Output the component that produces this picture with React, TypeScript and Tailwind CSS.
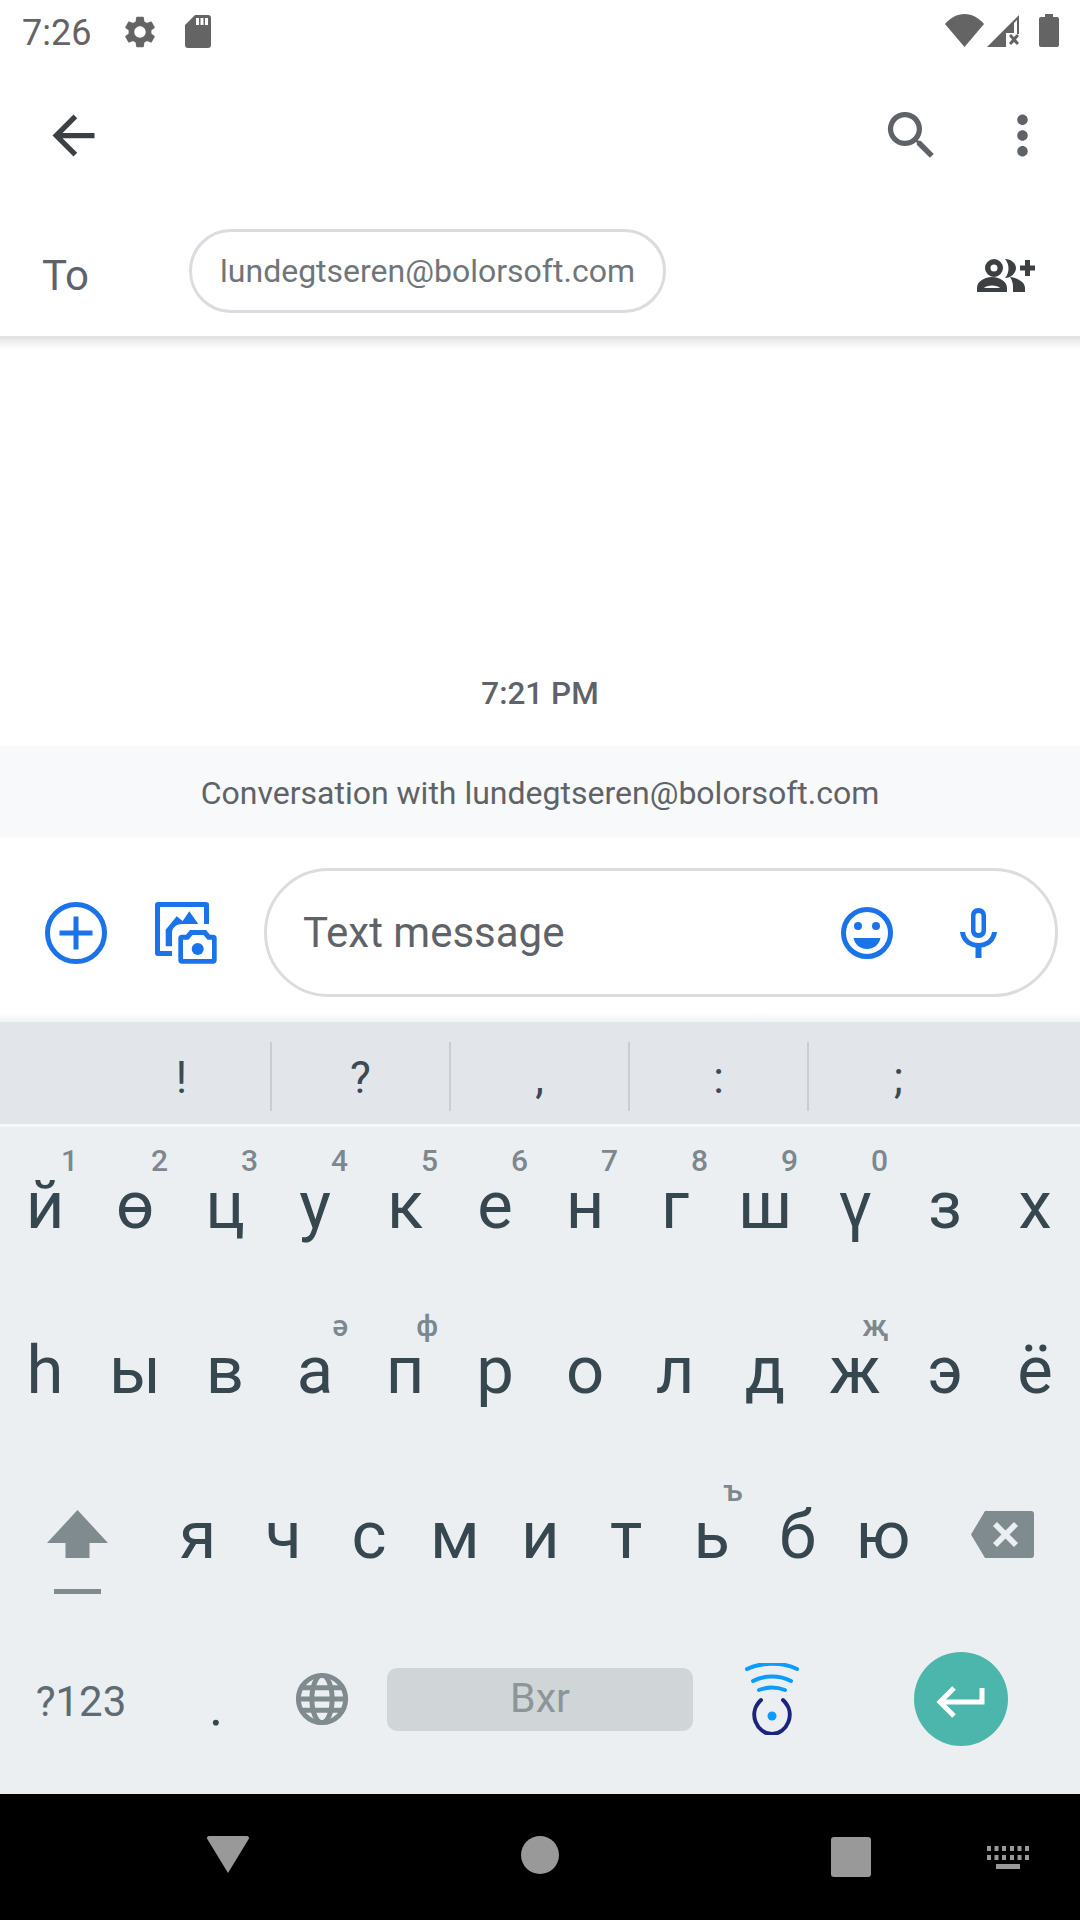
const ROW1 = [
  ['й', '1'], ['ө', '2'], ['ц', '3'], ['у', '4'], ['к', '5'], ['е', '6'],
  ['н', '7'], ['г', '8'], ['ш', '9'], ['ү', '0'], ['з', ''], ['х', ''],
]
const ROW2 = [
  ['һ', ''], ['ы', ''], ['в', ''], ['а', 'ә'], ['п', 'ф'], ['р', ''],
  ['о', ''], ['л', ''], ['д', ''], ['ж', 'җ'], ['э', ''], ['ё', ''],
]
const ROW3 = [
  ['я', ''], ['ч', ''], ['с', ''], ['м', ''], ['и', ''], ['т', ''],
  ['ь', 'ъ'], ['б', ''], ['ю', ''],
]

function Key({ label, hint, wide }: { label: string; hint: string; wide?: boolean }) {
  return (
    <div className={`relative flex h-full justify-center ${wide ? 'w-[90px]' : 'w-[85.67px]'}`}>
      <span className="mt-[54px] h-[48px] text-[67px] leading-[48px] text-[#37474f]">{label}</span>
      {hint && (
        <span className="absolute right-[12px] top-[16px] text-[30px] leading-[36px] font-medium text-[#7c878e]">
          {hint}
        </span>
      )}
    </div>
  )
}

function StatusBar() {
  return (
    <div className="flex h-[66px] items-start pt-[14px] text-[#646464]">
      <span className="ml-[22px] text-[36px] leading-[38px]">7:26</span>
      <svg className="ml-[30px] -mt-px h-[38px] w-[38px]" viewBox="0 0 24 24" fill="currentColor">
        <path d="M19.14 12.94c.04-.3.06-.61.06-.94 0-.32-.02-.64-.07-.94l2.03-1.58a.49.49 0 0 0 .12-.61l-1.92-3.32a.488.488 0 0 0-.59-.22l-2.39.96c-.5-.38-1.03-.7-1.62-.94l-.36-2.54a.484.484 0 0 0-.48-.41h-3.84c-.24 0-.43.17-.47.41l-.36 2.54c-.59.24-1.13.57-1.62.94l-2.39-.96c-.22-.08-.47 0-.59.22L2.74 8.87c-.12.21-.08.47.12.61l2.03 1.58c-.05.3-.09.63-.09.94s.02.64.07.94l-2.03 1.58a.49.49 0 0 0-.12.61l1.92 3.32c.12.22.37.29.59.22l2.39-.96c.5.38 1.03.7 1.62.94l.36 2.54c.05.24.24.41.48.41h3.84c.24 0 .44-.17.47-.41l.36-2.54c.59-.24 1.13-.56 1.62-.94l2.39.96c.22.08.47 0 .59-.22l1.92-3.32c.12-.22.07-.47-.12-.61l-2.01-1.58zM12 15.6c-1.98 0-3.6-1.62-3.6-3.6s1.62-3.6 3.6-3.6 3.6 1.62 3.6 3.6-1.62 3.6-3.6 3.6z" />
      </svg>
      <svg className="ml-[26px] mt-[1px] h-[33px] w-[26px]" viewBox="0 0 26 33" fill="currentColor">
        <path fillRule="evenodd" d="M10 0h13a3 3 0 0 1 3 3v27a3 3 0 0 1-3 3H3a3 3 0 0 1-3-3V10L10 0zM11 3v7h3V3h-3zM15.500 3v7h3V3h-3zM20 3v7h3V3h-3z" />
      </svg>
      <svg className="ml-auto h-[33px] w-[39px]" viewBox="0 0 39 33" fill="currentColor">
        <path d="M0 10C5 4 12 0 19.500 0S34 4 39 10L19.500 33 0 10z" />
      </svg>
      <svg className="ml-[3px] h-[33px] w-[33px]" viewBox="0 0 33 33" fill="currentColor">
        <path d="M0 33L25 8v11h-6v14H0z" />
        <path d="M25 8l7-7v19h-2V6l-3 3v10h-2V8z" />
        <path d="M22 22l2-2 3 3 3-3 2 2-3 3.500 3 3.500-2 2-3-3-3 3-2-2 3-3.500-3-3.500z" />
      </svg>
      <svg className="ml-[19px] mr-[21px] h-[33px] w-[20px]" viewBox="0 0 20 33" fill="currentColor">
        <path d="M6 0h8v3h4a2 2 0 0 1 2 2v26a2 2 0 0 1-2 2H2a2 2 0 0 1-2-2V5a2 2 0 0 1 2-2h4V0z" />
      </svg>
    </div>
  )
}

function Toolbar() {
  return (
    <div className="flex h-[138px] items-center">
      <svg className="ml-[42px] h-[63px] w-[63px] text-[#3c4043]" viewBox="0 0 24 24" fill="currentColor">
        <path d="M20 11H7.830l5.590-5.590L12 4l-8 8 8 8 1.410-1.410L7.830 13H20v-2z" />
      </svg>
      <svg className="ml-auto h-[63px] w-[63px] text-[#5f6368]" viewBox="0 0 24 24" fill="currentColor">
        <path d="M15.500 14h-.79l-.28-.27A6.471 6.471 0 0 0 16 9.500 6.500 6.500 0 1 0 9.500 16c1.610 0 3.090-.59 4.230-1.570l.27.28v.79l5 4.990L20.490 19l-4.990-5zm-6 0C7.010 14 5 11.990 5 9.500S7.010 5 9.500 5 14 7.010 14 9.500 11.990 14 9.500 14z" />
      </svg>
      <svg className="ml-[48px] mr-[26px] h-[63px] w-[63px] text-[#5f6368]" viewBox="0 0 24 24" fill="currentColor">
        <path d="M12 8c1.100 0 2-.9 2-2s-.9-2-2-2-2 .9-2 2 .9 2 2 2zm0 2c-1.100 0-2 .9-2 2s.9 2 2 2 2-.9 2-2-.9-2-2-2zm0 6c-1.100 0-2 .9-2 2s.9 2 2 2 2-.9 2-2-.9-2-2-2z" />
      </svg>
    </div>
  )
}

function ToRow() {
  return (
    <div className="flex h-[132px] items-start">
      <span className="ml-[42px] mt-[47px] text-[42px] leading-[50px] text-[#5f6368]">To</span>
      <div className="ml-[100px] mt-[25px] flex h-[84px] w-[477px] items-center justify-center rounded-full border-[3px] border-[#dadce0]">
        <span className="text-[32px] text-[#70757a]">lundegtseren@bolorsoft.com</span>
      </div>
      <svg className="ml-auto mr-[45px] mt-[55px] h-[33px] w-[58px] text-[#3c4043]" viewBox="0 0 58 33" fill="currentColor">
        <path fillRule="evenodd" d="M17 0a9 9 0 1 1 0 18 9 9 0 0 1 0-18zm0 5.500a3.500 3.500 0 1 0 0 7 3.500 3.500 0 0 0 0-7z" />
        <path fillRule="evenodd" d="M0 33v-4c0-7 8-11 15-11s15 4 15 11v4H0zm7-4h16c-2-3.500-14-3.500-16 0z" />
        <path d="M28 0c6 0 11 4 11 9s-5 10-11 10c2.500-3 3.500-6 3.500-9.500S30.500 3 28 0z" />
        <path d="M33 18c8 1 15 5 15 11v4H36v-5c0-4-1-7-3-10z" />
        <path d="M48 1h5v5.500h5v5h-5V17h-5v-5.500h-5v-5h5z" />
      </svg>
    </div>
  )
}

function ComposeBar() {
  return (
    <div className="flex h-[175px] items-center bg-white pt-[16px]">
      <svg className="ml-[45px] h-[62px] w-[62px] text-[#1a73e8]" viewBox="0 0 62 62" fill="none" stroke="currentColor" strokeWidth="5">
        <circle cx="31" cy="31" r="28.500" />
        <path d="M31 14.500v33M14.500 31h33" />
      </svg>
      <svg className="ml-[48px] h-[62px] w-[62px] text-[#1a73e8]" viewBox="0 0 62 62" fill="currentColor">
        <path d="M3 0h48a3 3 0 0 1 3 3v19h-5V5H5v44h12v5H3a3 3 0 0 1-3-3V3a3 3 0 0 1 3-3z" />
        <path d="M10.700 27.700L21.700 14.300l6 4.700 6.600-9.700 9 12.700H27c-6 0-10 4-10 9v13.300h-6.300z" />
        <path fillRule="evenodd" d="M31 32.700L35 28h16l4 4.700h3a3.700 3.700 0 0 1 3.700 3.700v21.600a3.700 3.700 0 0 1-3.700 3.700H27a3.700 3.700 0 0 1-3.700-3.700V36.400a3.700 3.700 0 0 1 3.700-3.700h4zm-3 5V57h29V37.700h-4.500l-4-4.700h-11l-4 4.700H28z" />
        <circle cx="42.700" cy="47" r="6" />
      </svg>
      <div className="ml-[47px] flex h-[129px] w-[794px] items-center rounded-full border-[3px] border-[#dadce0]">
        <span className="ml-[36px] text-[42px] leading-[50px] text-[#5f6368]">Text message</span>
        <svg className="ml-auto h-[54px] w-[54px] text-[#1a73e8]" viewBox="0 0 54 54" fill="currentColor">
          <circle cx="27" cy="27" r="23.500" fill="none" stroke="currentColor" strokeWidth="5" />
          <circle cx="18" cy="20" r="4" />
          <circle cx="36" cy="20" r="4" />
          <path d="M13.500 32h27c-1.500 7-7 11-13.500 11S15 39 13.500 32z" />
        </svg>
        <svg className="ml-[66px] mr-[58px] h-[50px] w-[37px] text-[#1a73e8]" viewBox="0 0 37 50" fill="currentColor">
          <path fillRule="evenodd" d="M18.500 0C23 0 26 3 26 7.500v15C26 27 23 30 18.500 30S11 27 11 22.500v-15C11 3 14 0 18.500 0zm0 5C16.500 5 15.500 6 15.500 8v14c0 2 1 3 3 3s3-1 3-3V8c0-2-1-3-3-3z" />
          <path d="M0 24h5c1 7 6.500 11 13.500 11S31 31 32 24h5c-1 8.500-7 14.500-15.500 15.500V50h-6V39.500C7 38.500 1 32.500 0 24z" />
        </svg>
      </div>
    </div>
  )
}

function SuggestionBar() {
  const items = ['!', '?', ',', ':', ';']
  return (
    <div className="grid h-[102px] grid-cols-5 bg-[#e2e6ea] pl-[93px] pr-[92px] py-[20px]">
      {items.map((ch, i) => (
        <div key={ch} className={`flex items-center justify-center pt-[3px] text-[44px] text-[#3c4a52] ${i < 4 ? 'border-r-2 border-[#c9ced1]' : ''}`}>
          {ch}
        </div>
      ))}
    </div>
  )
}

function Keyboard() {
  return (
    <div className="flex h-[667px] flex-col bg-[#eceff2]">
      <div className="flex h-[165px]">
        {ROW1.map(([l, h]) => <Key key={l} label={l} hint={h} wide />)}
      </div>
      <div className="flex h-[165px]">
        {ROW2.map(([l, h]) => <Key key={l} label={l} hint={h} wide />)}
      </div>
      <div className="flex h-[165px]">
        <div className="flex w-[155px] flex-col items-center pt-[53px]">
          <svg className="h-[48px] w-[61px] text-[#808b8f]" viewBox="0 0 61 48" fill="currentColor">
            <path d="M30.500 0L61 33H42.500v15h-24V33H0L30.500 0z" />
          </svg>
          <div className="mt-[31px] h-[5px] w-[47px] bg-[#808b8f]" />
        </div>
        {ROW3.map(([l, h]) => <Key key={l} label={l} hint={h} />)}
        <div className="flex w-[154px] justify-center pt-[54px]">
          <svg className="h-[47px] w-[63px] text-[#808b8f]" viewBox="0 0 63 47" fill="currentColor">
            <path fillRule="evenodd" d="M14 0h46a3 3 0 0 1 3 3v41a3 3 0 0 1-3 3H14L0 23.500 14 0zm12 11l-4 4 8.500 8.500L22 32l4 4 8.500-8.500L43 36l4-4-8.500-8.500L47 15l-4-4-8.500 8.500L26 11z" />
          </svg>
        </div>
      </div>
      <div className="flex flex-1 items-start pt-[30px]">
        <div className="flex h-[94px] w-[162px] items-center justify-center pt-[4px] text-[42px] text-[#5f6b72]">?123</div>
        <div className="flex h-[94px] w-[108px] justify-center text-[54px] leading-[109px] text-[#37474f]">.</div>
        <div className="flex h-[94px] w-[107px] items-center justify-center pr-[3px]">
          <svg className="h-[54px] w-[54px] text-[#808b8f]" viewBox="0 0 24 24" fill="none" stroke="currentColor" strokeWidth="2.200">
            <circle cx="12" cy="12" r="10.500" />
            <ellipse cx="12" cy="12" rx="4.500" ry="10.500" />
            <path d="M1.500 12h21M3 7h18M3 17h18" />
          </svg>
        </div>
        <div className="flex h-[94px] w-[326px] items-center px-[10px]">
          <div className="flex h-[63px] w-full items-center justify-center rounded-[10px] bg-[#d0d5d8] text-[41px] text-[#8c9598]">Bxr</div>
        </div>
        <div className="flex h-[94px] w-[138px] items-center justify-center">
          <svg className="h-[72px] w-[54px]" viewBox="0 0 54 72" fill="none" strokeLinecap="round">
            <path d="M2 6C16-1 38-1 52 6" stroke="#0c9cff" strokeWidth="4" />
            <path d="M8 18C19 12 35 12 46 18" stroke="#0c9cff" strokeWidth="4" />
            <path d="M14 27C22 24 32 24 40 27" stroke="#0c9cff" strokeWidth="4" />
            <path d="M16 37C2 50 12 71 27 71S52 50 38 37" stroke="#1a237e" strokeWidth="4" />
            <circle cx="27" cy="53" r="4.500" fill="#0c9cff" />
          </svg>
        </div>
        <div className="flex w-[239px] justify-center">
          <div className="flex h-[94px] w-[94px] items-center justify-center rounded-full bg-[#4db6ac]">
            <svg className="h-[50px] w-[50px] text-white" viewBox="0 0 50 50" fill="none" stroke="currentColor" strokeWidth="5">
              <path d="M46 14v14H5" />
              <path d="M18 14L4 28l14 14" />
            </svg>
          </div>
        </div>
      </div>
    </div>
  )
}

function NavBar() {
  return (
    <div className="flex h-[126px] items-start bg-black pt-[42px] text-[#999999]">
      <svg className="ml-[207px] h-[37px] w-[42px]" viewBox="0 0 42 37" fill="currentColor">
        <path d="M2 0h38a2 2 0 0 1 1.700 3L21 37 .3 3A2 2 0 0 1 2 0z" />
      </svg>
      <div className="ml-[272px] h-[38px] w-[38px] rounded-full bg-[#999999]" />
      <div className="ml-[272px] mt-px h-[40px] w-[40px] rounded-[3px] bg-[#999999]" />
      <svg className="ml-[116px] mt-[10px] h-[23px] w-[42px]" viewBox="0 0 42 23" fill="currentColor">
        <path d="M0 0h4v5H0zM7.500 0h4v5h-4zM15 0h4v5h-4zM23 0h4v5h-4zM30.500 0h4v5h-4zM38 0h4v5h-4zM0 9h4v5H0zM7.500 9h4v5h-4zM15 9h4v5h-4zM23 9h4v5h-4zM30.500 9h4v5h-4zM38 9h4v5h-4zM9 18h24v5H9z" />
      </svg>
    </div>
  )
}

export default function App() {
  return (
    <div className="flex h-[1920px] w-[1080px] flex-col overflow-hidden bg-white font-['Roboto',sans-serif]">
      <StatusBar />
      <Toolbar />
      <ToRow />
      {/* Shadow under the recipient row */}
      <div className="h-[3px] bg-[#e3e3e3]" />
      <div className="h-[10px] bg-gradient-to-b from-[#e8e8e8] to-white" />

      {/* Thread */}
      <div className="flex flex-1 flex-col justify-end">
        <div className="mb-[32px] text-center text-[31.500px] leading-[40px] font-medium text-[#5f6368]">7:21 PM</div>
        <div className="flex h-[91px] items-center justify-center bg-[#f8f9fa] pt-[3px] text-[32px] text-[#5f6368]">
          Conversation with lundegtseren@bolorsoft.com
        </div>
      </div>

      <ComposeBar />
      <div className="h-[10px] bg-gradient-to-b from-white to-[#f1f3f4]" />
      <SuggestionBar />
      <div className="h-[3px] bg-[#f5f7f8]" />
      <Keyboard />
      <NavBar />
    </div>
  )
}
